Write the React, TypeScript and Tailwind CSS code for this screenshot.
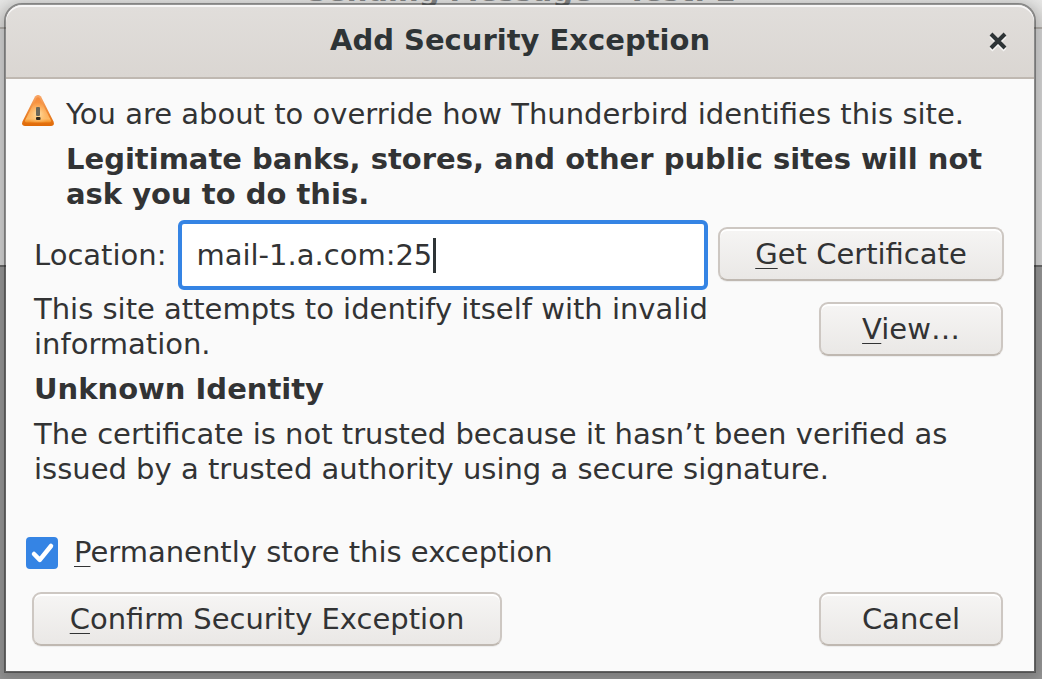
import { useState } from 'react';
import type { ReactNode } from 'react';

function AccessKey({ children }: { children: ReactNode }) {
  return (
    <span className="underline decoration-1 underline-offset-4 [text-decoration-skip-ink:none]">{children}</span>
  );
}

function Button({ className, children }: { className: string; children: ReactNode }) {
  return (
    <button
      type="button"
      className={`h-[54px] shrink-0 whitespace-nowrap rounded-[9px] border-2 border-[#cdc7c2] border-b-[#bfb8b1] bg-linear-to-b from-[#f6f5f4] to-[#eae8e6] text-center shadow-[inset_0_2px_0_#ffffff,0_1px_1px_rgba(0,0,0,0.06)] ${className}`}
    >
      {children}
    </button>
  );
}

function WarningIcon() {
  return (
    <svg viewBox="0 0 32 32" className="-mt-0.5 h-8 w-8 shrink-0" role="img" aria-label="Warning">
      <defs>
        <linearGradient id="warnFill" x1="0" y1="0" x2="0" y2="1">
          <stop offset="0" stopColor="#f58a3c" />
          <stop offset="0.5" stopColor="#fba04a" />
          <stop offset="0.85" stopColor="#fdb863" />
          <stop offset="1" stopColor="#f28a1c" />
        </linearGradient>
        <linearGradient id="warnEdge" x1="0" y1="0" x2="0" y2="1">
          <stop offset="0" stopColor="#f9a768" />
          <stop offset="1" stopColor="#e06a06" />
        </linearGradient>
        <radialGradient id="warnGlow" cx="0.5" cy="0.65" r="0.45">
          <stop offset="0" stopColor="#ffe2a8" />
          <stop offset="1" stopColor="#ffc070" stopOpacity="0" />
        </radialGradient>
      </defs>
      <path d="M13 1.5Q16 -1.6 19 1.5L31.500 26.5Q33 31 29 31H3Q-1 31 0.500 26.5Z" fill="url(#warnEdge)" />
      <path d="M14.500 3Q16 1.5 17.500 3L29 25.6Q29.500 27.600 27.500 27.600H4.500Q2.500 27.600 3 25.6Z" fill="url(#warnFill)" />
      <path d="M14.500 3Q16 1.5 17.500 3L29 25.6Q29.500 27.600 27.500 27.600H4.500Q2.500 27.600 3 25.6Z" fill="url(#warnGlow)" />
      <rect x="14" y="12" width="4" height="9" rx="1" fill="#6b6759" />
      <rect x="14" y="22" width="4.500" height="3" rx="1" fill="#33281a" />
    </svg>
  );
}

export default function App() {
  const [location, setLocation] = useState('mail-1.a.com:25');
  const [store, setStore] = useState(true);

  return (
    <div className="relative flex min-h-screen flex-col overflow-hidden bg-[#989898] pt-[3px] pr-1.5 pb-1.5 pl-1 font-['DejaVu_Sans',sans-serif] text-[29px] leading-[35px] text-[#2e3436]">
      <div className="absolute inset-x-0 top-0 h-[267px] border-b-2 border-[#6a6a6a] bg-[#d6d6d6]">
        <div className="flex h-[29px] items-end justify-center border-b-2 border-[#b3afab] bg-linear-to-b from-[#e6e6e5] to-[#dddcda] pb-[18px]">
          <p className="font-bold text-[#858788]">Sending Message – Test: 2</p>
        </div>
      </div>

      <section
        role="dialog"
        aria-labelledby="dialog-title"
        className="relative flex grow flex-col overflow-hidden rounded-t-[18px] border-2 border-black/35 bg-[#fafafa] bg-clip-padding shadow-[0_3px_14px_4px_rgba(0,0,0,0.2)]"
      >
        <header className="relative flex h-[74px] shrink-0 items-center justify-center rounded-t-2xl border-b-2 border-[#bfb8b1] bg-linear-to-b from-[#e1dedb] to-[#dad6d2] pb-0.5 shadow-[inset_0_2px_0_#f8f7f7]">
          <h1 id="dialog-title" className="font-bold">Add Security Exception</h1>
          <button type="button" aria-label="Close" className="absolute top-7 right-7 flex h-4 w-4 items-center justify-center">
            <svg viewBox="0 0 16 16" className="h-4 w-4 overflow-visible" fill="none" strokeWidth="4">
              <path d="M1 3L15 17M15 3L1 17" stroke="#f7f6f5" />
              <path d="M1 1L15 15M15 1L1 15" stroke="#2e3436" />
            </svg>
          </button>
        </header>

        <div className="flex grow flex-col px-7 pt-[18px] pb-[25px] text-[#323334]">
          <div className="-ml-3 flex gap-3">
            <WarningIcon />
            <div className="flex flex-col gap-2.5">
              <p>You are about to override how Thunderbird identifies this site.</p>
              <p className="font-bold">Legitimate banks, stores, and other public sites will not ask you to do this.</p>
            </div>
          </div>

          <div className="mt-2 flex items-center gap-2.5">
            <label htmlFor="location" className="pr-0.5">Location:</label>
            <div className="relative grow">
              <input
                id="location"
                type="text"
                value={location}
                onChange={(e) => setLocation(e.target.value)}
                className="h-[70px] w-full rounded-md border-4 border-[#3584e4] bg-white px-3.5 caret-transparent outline-none"
              />
              <span className="absolute top-[18px] left-[255px] h-[35px] w-[3px] bg-[#2e3436]" />
            </div>
            <Button className="mr-0.5 mb-0.5 w-[286px]"><AccessKey>G</AccessKey>et Certificate</Button>
          </div>

          <div className="mt-0.5 flex items-center justify-between">
            <p className="max-w-[720px]">This site attempts to identify itself with invalid information.</p>
            <Button className="mt-1 mr-[3px] w-[184px]"><AccessKey>V</AccessKey>iew…</Button>
          </div>

          <h2 className="mt-2.5 font-bold">Unknown Identity</h2>
          <p className="mt-2.5">
            The certificate is not trusted because it hasn’t been verified as issued by a trusted authority using a secure signature.
          </p>

          <label className="-ml-2 mt-auto flex items-center gap-4">
            <span className="relative flex h-8 w-8">
              <input
                type="checkbox"
                checked={store}
                onChange={(e) => setStore(e.target.checked)}
                className="peer h-8 w-8 appearance-none rounded-[4px] border-2 border-[#cdc7c2] bg-white checked:border-[#3584e4] checked:bg-[#3584e4]"
              />
              <svg
                viewBox="0 0 32 32"
                className="pointer-events-none absolute inset-0 hidden h-8 w-8 peer-checked:block"
                fill="none"
                stroke="#ffffff"
                strokeWidth="4.5"
              >
                <path d="M8 17L13.800 22.800L25 9" strokeLinecap="round" strokeLinejoin="round" />
              </svg>
            </span>
            <span><AccessKey>P</AccessKey>ermanently store this exception</span>
          </label>

          <div className="-ml-0.5 mr-[3px] mt-[22px] flex justify-between">
            <Button className="w-[470px]"><AccessKey>C</AccessKey>onfirm Security Exception</Button>
            <Button className="w-[184px]">Cancel</Button>
          </div>
        </div>
      </section>
    </div>
  );
}
